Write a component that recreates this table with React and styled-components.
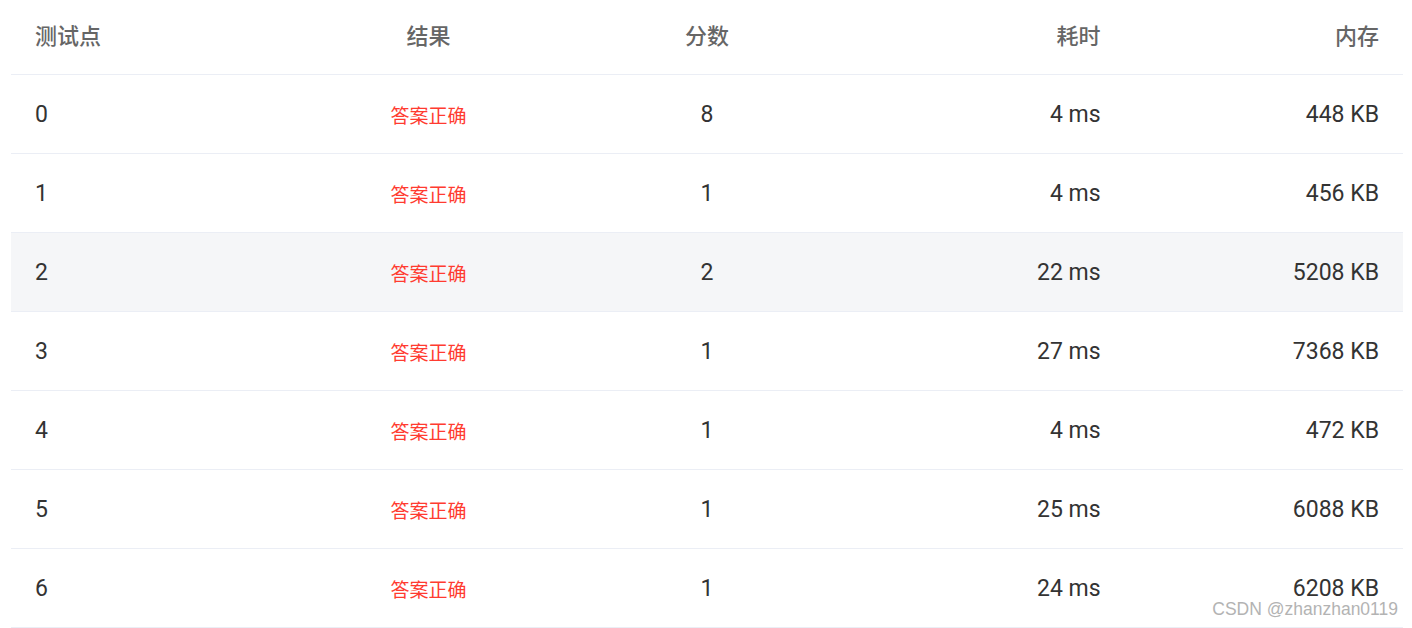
import styled, { createGlobalStyle } from 'styled-components';

const GlobalStyle = createGlobalStyle`
    html, body {
        margin: 0;
        padding: 0;
        background: #fff;
    }
    body {
        font-family: Roboto, "Noto Sans CJK SC", sans-serif;
    }
`;

const Page = styled.div`
    position: relative;
    width: 1412px;
    height: 628px;
    padding: 0 9px 0 11px;
    box-sizing: border-box;
    overflow: hidden;
`;

const Table = styled.div`
    display: grid;
    grid-template-columns: repeat(5, 1fr);
`;

const Cell = styled.div`
    display: flex;
    align-items: center;
    justify-content: ${(p) =>
        p.$align === 'center' ? 'center' : p.$align === 'right' ? 'flex-end' : 'flex-start'};
    padding: ${(p) => (p.$head ? '0 24px 7px' : '0 24px')};
    box-sizing: border-box;
    height: ${(p) => (p.$head ? '75px' : '79px')};
    border-bottom: 1px solid #ebeef5;
    background: ${(p) => (p.$hover ? '#f5f6f8' : 'transparent')};
    color: ${(p) => (p.$head ? '#666666' : '#333333')};
    font-size: ${(p) => (p.$head ? '22px' : '23px')};
    font-weight: ${(p) => (p.$head ? 500 : 400)};
    white-space: nowrap;
`;

const Result = styled.span`
    color: #ff3b30;
    font-size: 19px;
`;

const Watermark = styled.div`
    position: absolute;
    right: 14px;
    bottom: 8px;
    font-family: "Liberation Sans", Arial, sans-serif;
    font-size: 17.5px;
    color: #b3b3b3;
`;

const columns = [
    { title: '测试点', align: 'left' },
    { title: '结果', align: 'center' },
    { title: '分数', align: 'center' },
    { title: '耗时', align: 'right' },
    { title: '内存', align: 'right' },
];

const rows = [
    [0, 8, 4, 448],
    [1, 1, 4, 456],
    [2, 2, 22, 5208],
    [3, 1, 27, 7368],
    [4, 1, 4, 472],
    [5, 1, 25, 6088],
    [6, 1, 24, 6208],
];

const App = () => {
    return (
        <Page>
            <GlobalStyle />
            <Table>
                {columns.map((c) => (
                    <Cell key={c.title} $head $align={c.align}>
                        {c.title}
                    </Cell>
                ))}
                {rows.map(([id, score, time, mem]) => {
                    const hover = id === 2;
                    return [
                        <Cell key={`${id}-a`} $hover={hover} $align="left">{id}</Cell>,
                        <Cell key={`${id}-b`} $hover={hover} $align="center">
                            <Result>答案正确</Result>
                        </Cell>,
                        <Cell key={`${id}-c`} $hover={hover} $align="center">{score}</Cell>,
                        <Cell key={`${id}-d`} $hover={hover} $align="right">{time} ms</Cell>,
                        <Cell key={`${id}-e`} $hover={hover} $align="right">{mem} KB</Cell>,
                    ];
                })}
            </Table>
            <Watermark>CSDN @zhanzhan0119</Watermark>
        </Page>
    );
};

export default App;
